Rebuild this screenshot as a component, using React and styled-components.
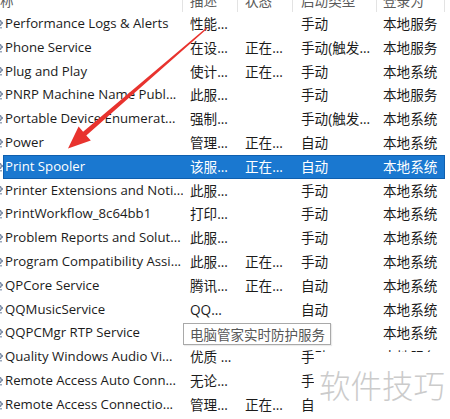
import React from "react";
import styled, { createGlobalStyle } from "styled-components";

const GlobalStyle = createGlobalStyle`
  html, body {
    margin: 0;
    padding: 0;
    background: #ffffff;
    overflow: hidden;
  }
`;

const FONT = `"Open Sans", "Noto Sans CJK SC", sans-serif`;
const ROW_H = 23.8;

const columns = [
  { key: "name", label: "名称", width: 183, pad: 5 },
  { key: "desc", label: "描述", width: 55, pad: 7 },
  { key: "status", label: "状态", width: 55, pad: 7 },
  { key: "startup", label: "启动类型", width: 84, pad: 8 },
  { key: "logon", label: "登录为", width: 68, pad: 6 },
];

const services = [
  ["Performance Logs & Alerts", "性能...", "", "手动", "本地服务"],
  ["Phone Service", "在设...", "正在...", "手动(触发...", "本地服务"],
  ["Plug and Play", "使计...", "正在...", "手动", "本地系统"],
  ["PNRP Machine Name Publ...", "此服...", "", "手动", "本地服务"],
  ["Portable Device Enumerat...", "强制...", "", "手动(触发...", "本地系统"],
  ["Power", "管理...", "正在...", "自动", "本地系统"],
  ["Print Spooler", "该服...", "正在...", "自动", "本地系统"],
  ["Printer Extensions and Noti...", "此服...", "", "手动", "本地系统"],
  ["PrintWorkflow_8c64bb1", "打印...", "", "手动", "本地系统"],
  ["Problem Reports and Solut...", "此服...", "", "手动", "本地系统"],
  ["Program Compatibility Assi...", "此服...", "正在...", "手动", "本地系统"],
  ["QPCore Service", "腾讯...", "正在...", "自动", "本地系统"],
  ["QQMusicService", "QQ...", "", "自动", "本地系统"],
  ["QQPCMgr RTP Service", "电脑...", "正在...", "自动", "本地系统"],
  ["Quality Windows Audio Vi...", "优质 ...", "", "手动", "本地服务"],
  ["Remote Access Auto Conn...", "无论...", "", "手动", "本地系统"],
  ["Remote Access Connectio...", "管理...", "正在...", "自动", "本地系统"],
];

const SELECTED = 6;

export default function App() {
  return (
    <>
      <GlobalStyle />
      <Viewport>
        <Table>
          <HeaderRow>
            {columns.map((c) => (
              <HeaderCell key={c.key} $w={c.width} $pad={c.pad}>
                {c.key === "name" ? "称" : c.label}
              </HeaderCell>
            ))}
          </HeaderRow>

          {services.map((row, i) => (
            <Row key={i}>
              <GearIcon width="3" height="12" viewBox="7 0 3 12">
                <path
                  d="M6 2h2l.6 1.6 1.4.6V5.8l-1.4.6L8 8H6V6.6a1.6 1.6 0 0 0 0-3.2z"
                  fill="#7d8ea8"
                />
                <path d="M6 9h3v1.5H6z" fill="#9aa8bd" />
              </GearIcon>
              <RowBody $selected={i === SELECTED}>
                {row.map((text, j) => (
                  <Cell
                    key={j}
                    $w={j === 0 ? columns[0].width - 3 : columns[j].width}
                    $pad={j === 0 ? 2 : columns[j].pad}
                    $latin={j === 0}
                  >
                    {text}
                  </Cell>
                ))}
              </RowBody>
            </Row>
          ))}
        </Table>

        <Arrow width="450" height="419" viewBox="0 0 450 419">
          <polygon
            points="207.4,28.4 86.3,135.5 90.8,140.6 68,148.5 78.6,126.6 83.1,131.7 206.6,27.6"
            fill="#e8332e"
          />
        </Arrow>

        <Tooltip>电脑管家实时防护服务</Tooltip>

        <Watermark>软件技巧</Watermark>
      </Viewport>
    </>
  );
}

const Viewport = styled.div`
  position: relative;
  width: 450px;
  height: 419px;
  overflow: hidden;
  background: #ffffff;
  font-family: ${FONT};
  font-size: 13.6px;
  color: #1b1b1b;
`;

const Table = styled.div`
  display: flex;
  flex-direction: column;
  margin-top: -12px;
`;

const HeaderRow = styled.div`
  display: flex;
  height: 24px;
  align-items: center;
`;

const HeaderCell = styled.div`
  box-sizing: border-box;
  width: ${(p) => p.$w}px;
  flex: none;
  height: 100%;
  display: flex;
  align-items: center;
  padding-left: ${(p) => p.$pad}px;
  color: #5a5a5a;
  border-right: 1px solid #e3e3e3;
  white-space: nowrap;
  overflow: hidden;

  &:first-child {
    padding-left: 0;
  }
`;

const Row = styled.div`
  display: flex;
  align-items: center;
  height: ${ROW_H}px;
  width: 445px;
`;

const RowBody = styled.div`
  display: flex;
  align-items: center;
  height: 100%;
  flex: 1;
  background: ${(p) => (p.$selected ? "#1a78d0" : "transparent")};
  box-shadow: ${(p) => (p.$selected ? "inset 0 0 0 1px #0f5fae" : "none")};
  color: ${(p) => (p.$selected ? "#ffffff" : "inherit")};
`;

const GearIcon = styled.svg`
  flex: none;
  display: block;
`;

const Cell = styled.div`
  box-sizing: border-box;
  width: ${(p) => p.$w}px;
  flex: none;
  padding-left: ${(p) => p.$pad}px;
  white-space: nowrap;
  overflow: hidden;
  line-height: ${ROW_H}px;
  font-size: ${(p) => (p.$latin ? "13.2px" : "13.6px")};
`;

const Arrow = styled.svg`
  position: absolute;
  left: 0;
  top: 0;
  pointer-events: none;
`;

const Tooltip = styled.div`
  position: absolute;
  left: 183px;
  top: 323px;
  height: 20px;
  padding: 0 5px 0 6px;
  display: flex;
  align-items: center;
  background: #ffffff;
  border: 1px solid #a9a9a9;
  color: #575757;
  font-size: 13.5px;
  white-space: nowrap;
  box-shadow: 1px 1px 1px rgba(0, 0, 0, 0.08);
`;

const Watermark = styled.div`
  position: absolute;
  left: 314px;
  top: 352px;
  right: 0;
  bottom: 0;
  background: #ffffff;
  display: flex;
  align-items: center;
  padding-left: 5px;
  padding-bottom: 4px;
  font-family: "Noto Sans CJK SC", sans-serif;
  font-size: 31.5px;
  font-weight: 300;
  color: #cbcbcb;
  white-space: nowrap;
`;
